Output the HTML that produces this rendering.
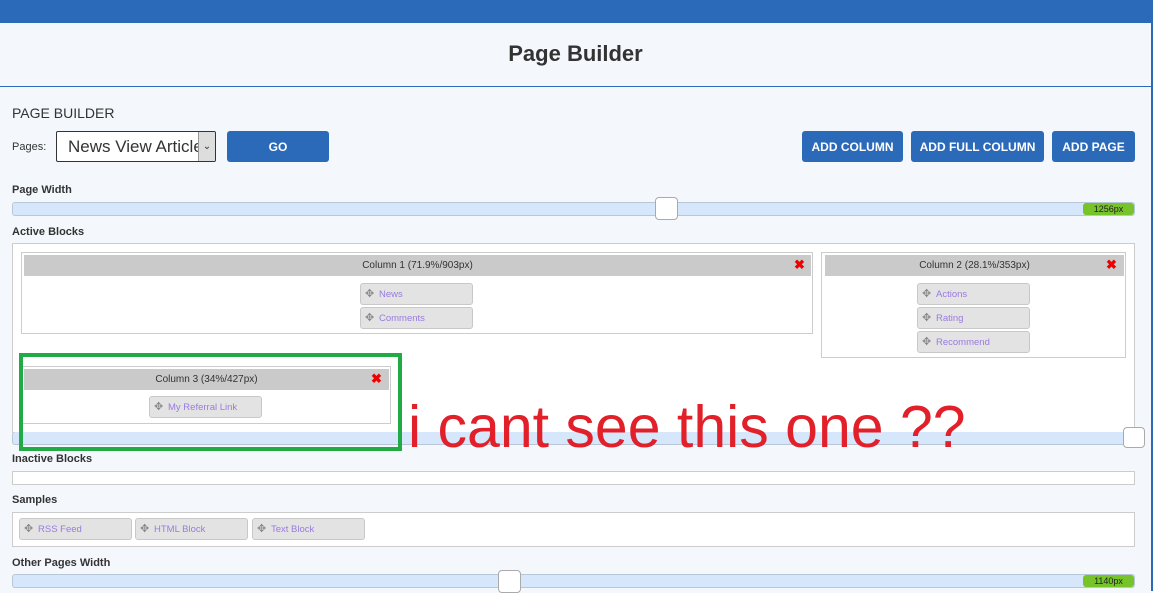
<!DOCTYPE html>
<html><head><style>
*{box-sizing:border-box;margin:0;padding:0}
body{width:1153px;height:591px;overflow:hidden;background:#f4f8fd;font-family:"Liberation Sans",sans-serif;position:relative;color:#333}
.a{position:absolute}
.lbl{position:absolute;left:12px;font-size:11px;font-weight:bold;color:#333}
.btn{position:absolute;top:131px;height:31px;background:#2a6ab9;border-radius:3px;color:#fff;font-weight:bold;font-size:12px;display:flex;align-items:center;justify-content:center}
.slider{position:absolute;left:12px;width:1123px;height:14px;background:#d6e7fb;border:1px solid #b8c7d8;border-radius:3px}
.handle{position:absolute;width:23px;height:23px;background:#fff;border:1px solid #aaa;border-radius:4px}
.badge{position:absolute;left:1083px;width:51px;height:12px;background:#76c32a;border-radius:3px;font-size:9px;color:#222;text-align:center;line-height:12px}
.box{position:absolute;background:#fff;border:1px solid #ccc}
.hd{position:absolute;background:#cacaca;font-size:10px;text-align:center;line-height:21px;color:#333}
.x{position:absolute;color:#e00;font-weight:bold;font-size:13px;line-height:19px}
.it{position:absolute;width:113px;height:22px;background:#e3e3e3;border:1px solid #c8c8c8;border-radius:3px;font-size:9.5px;color:#9a7be0;line-height:21px;padding-left:18px}
.it:before{content:"✥";position:absolute;left:4px;color:#888;font-size:11px}
</style></head><body>
<div class="a" style="left:0;top:0;width:1153px;height:23px;background:#2a6ab9"></div>
<div class="a" style="left:0;top:23px;width:1153px;height:64px;border-bottom:1px solid #2a6ab9;border-right:2px solid #2a6ab9;font-size:22px;font-weight:bold;text-align:center;line-height:62px;color:#333">Page Builder</div>
<div class="a" style="left:1151px;top:86px;width:2px;height:505px;background:#2a6ab9"></div>
<div class="a" style="left:12px;top:105px;font-size:14px">PAGE BUILDER</div>
<div class="a" style="left:12px;top:141px;font-size:11px">Pages:</div>
<div class="a" style="left:56px;top:131px;width:160px;height:31px;background:#fff;border:1px solid #333;border-radius:2px;overflow:hidden;font-size:17px;line-height:29px;padding-left:11px;white-space:nowrap">News View Article<div class="a" style="right:0;top:0;width:17px;height:29px;background:#ddd;border-left:1px solid #999;font-size:10px;text-align:center;padding:0">⌄</div></div>
<div class="btn" style="left:227px;width:102px">GO</div>
<div class="btn" style="left:802px;width:101px">ADD COLUMN</div>
<div class="btn" style="left:911px;width:133px">ADD FULL COLUMN</div>
<div class="btn" style="left:1052px;width:83px">ADD PAGE</div>
<div class="lbl" style="top:184px">Page Width</div>
<div class="slider" style="top:202px"></div>
<div class="handle" style="left:655px;top:197px"></div>
<div class="badge" style="top:203px">1256px</div>
<div class="lbl" style="top:226px">Active Blocks</div>
<div class="box" style="left:12px;top:243px;width:1123px;height:190px"></div>
<div class="slider" style="top:432px;height:13px;border-top:none"></div>
<div class="handle" style="left:1123px;top:427px;width:22px;height:21px"></div>
<div class="box" style="left:21px;top:252px;width:792px;height:82px"></div>
<div class="hd" style="left:24px;top:255px;width:787px">Column 1 (71.9%/903px)</div>
<div class="x" style="left:794px;top:255px">✖</div>
<div class="it" style="left:360px;top:283px">News</div>
<div class="it" style="left:360px;top:307px">Comments</div>
<div class="box" style="left:821px;top:252px;width:305px;height:106px"></div>
<div class="hd" style="left:825px;top:255px;width:299px">Column 2 (28.1%/353px)</div>
<div class="x" style="left:1106px;top:255px">✖</div>
<div class="it" style="left:917px;top:283px">Actions</div>
<div class="it" style="left:917px;top:307px">Rating</div>
<div class="it" style="left:917px;top:331px">Recommend</div>
<div class="box" style="left:21px;top:366px;width:370px;height:58px"></div>
<div class="hd" style="left:24px;top:369px;width:365px">Column 3 (34%/427px)</div>
<div class="x" style="left:371px;top:369px">✖</div>
<div class="it" style="left:149px;top:396px">My Referral Link</div>
<div class="a" style="left:19px;top:353px;width:383px;height:98px;border:4px solid #22aa44"></div>
<div class="a" style="left:408px;top:392px;font-size:59px;color:#e2202a;white-space:nowrap;line-height:70px">i cant see this one ??</div>
<div class="lbl" style="top:453px">Inactive Blocks</div>
<div class="box" style="left:12px;top:471px;width:1123px;height:14px"></div>
<div class="lbl" style="top:494px">Samples</div>
<div class="box" style="left:12px;top:512px;width:1123px;height:35px"></div>
<div class="it" style="left:19px;top:518px">RSS Feed</div>
<div class="it" style="left:135px;top:518px">HTML Block</div>
<div class="it" style="left:252px;top:518px">Text Block</div>
<div class="lbl" style="top:557px">Other Pages Width</div>
<div class="slider" style="top:574px"></div>
<div class="handle" style="left:498px;top:570px"></div>
<div class="badge" style="top:575px">1140px</div>
</body></html>
